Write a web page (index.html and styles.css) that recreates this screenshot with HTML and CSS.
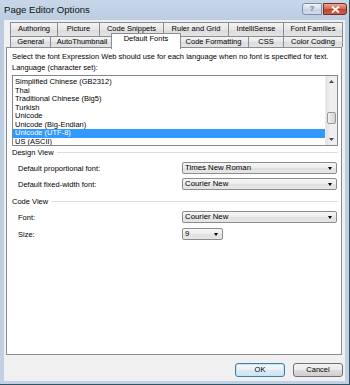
FILE: index.html
```
<!DOCTYPE html>
<html>
<head>
<meta charset="utf-8">
<link rel="stylesheet" href="styles.css">
</head>
<body>
<div class="window">
  <div class="titlebar">
    <span class="title">Page Editor Options</span>
    <div class="caption">
      <span class="cap-help">?</span>
      <span class="cap-close"><svg width="9" height="7" viewBox="0 0 9 7"><path d="M1 0.5 L8 6.5 M8 0.5 L1 6.5" stroke="#fff" stroke-width="1.8"/></svg></span>
    </div>
  </div>
  <div class="client">
    <div class="tabs">
      <div class="tabrow back">
        <div class="tab t-authoring">Authoring</div>
        <div class="tab t-picture">Picture</div>
        <div class="tab t-snippets">Code Snippets</div>
        <div class="tab t-ruler">Ruler and Grid</div>
        <div class="tab t-intelli">IntelliSense</div>
        <div class="tab t-families">Font Families</div>
      </div>
      <div class="tabrow front">
        <div class="tab t-general">General</div>
        <div class="tab t-thumb">AutoThumbnail</div>
        <div class="tab t-fonts selected">Default Fonts</div>
        <div class="tab t-format">Code Formatting</div>
        <div class="tab t-css">CSS</div>
        <div class="tab t-color">Color Coding</div>
      </div>
    </div>
    <div class="panel">
      <div class="intro">Select the font Expression Web should use for each language when no font is specified for text.</div>
      <div class="lang-label">Language (character set):</div>
      <div class="listbox">
        <div class="items">
          <div class="item">Simplified Chinese (GB2312)</div>
          <div class="item">Thai</div>
          <div class="item">Traditional Chinese (Big5)</div>
          <div class="item">Turkish</div>
          <div class="item">Unicode</div>
          <div class="item">Unicode (Big-Endian)</div>
          <div class="item sel">Unicode (UTF-8)</div>
          <div class="item">US (ASCII)</div>
        </div>
        <div class="scrollbar">
          <div class="sb-btn"><svg width="5" height="3" viewBox="0 0 5 3"><path d="M0 3 L2.5 0 L5 3Z" fill="#4d4d4d"/></svg></div>
          <div class="sb-track"><div class="sb-thumb"></div></div>
          <div class="sb-btn"><svg width="5" height="3" viewBox="0 0 5 3"><path d="M0 0 L5 0 L2.5 3Z" fill="#4d4d4d"/></svg></div>
        </div>
      </div>

      <div class="group-head"><span>Design View</span><i class="rule"></i></div>
      <div class="row first">
        <span class="label">Default proportional font:</span>
        <div class="select wide"><span>Times New Roman</span><i class="arrow"></i></div>
      </div>
      <div class="row">
        <span class="label">Default fixed-width font:</span>
        <div class="select wide"><span>Courier New</span><i class="arrow"></i></div>
      </div>

      <div class="group-head code"><span>Code View</span><i class="rule"></i></div>
      <div class="row first">
        <span class="label">Font:</span>
        <div class="select wide"><span>Courier New</span><i class="arrow"></i></div>
      </div>
      <div class="row first">
        <span class="label">Size:</span>
        <div class="select small"><span>9</span><i class="arrow"></i></div>
      </div>
    </div>
    <div class="buttons">
      <div class="btn default">OK</div>
      <div class="btn">Cancel</div>
    </div>
  </div>
</div>
</body>
</html>
```
FILE: styles.css
```
* { box-sizing: border-box; }

html, body {
  margin: 0;
  padding: 0;
}

body {
  width: 350px;
  height: 385px;
  overflow: hidden;
  font-family: "Liberation Sans", Arial, sans-serif;
  font-size: 7.5px;
  color: #000;
}

.window {
  width: 350px;
  height: 385px;
  display: flex;
  flex-direction: column;
  padding: 0 4px 3px 4px;
  background: linear-gradient(#c8d7e8, #bccde1 20px, #c1d1e3);
  border-right: 1px solid #2b5668;
  border-bottom: 1px solid #2b5668;
}

.titlebar {
  height: 20px;
  flex: 0 0 20px;
  display: flex;
  justify-content: space-between;
  align-items: flex-start;
  margin-right: -2px;
}

.title {
  font-size: 9.6px;
  line-height: 10px;
  margin-top: 5px;
  margin-left: 0;
  color: #111;
}

.caption {
  display: flex;
  gap: 1px;
  margin-top: 3px;
  height: 12px;
}

.cap-help {
  width: 20px;
  height: 12px;
  border: 1px solid #7a8ea6;
  border-radius: 3px 0 0 3px;
  background: linear-gradient(#edf2f8, #d3deeb 50%, #c5d3e4 51%, #d2dded);
  color: #667a93;
  font-size: 8px;
  line-height: 10px;
  text-align: center;
  font-weight: bold;
}

.cap-close {
  width: 24px;
  height: 12px;
  border: 1px solid #7a2c20;
  border-radius: 0 3px 3px 0;
  background: linear-gradient(#e9a896, #d2654d 50%, #c2442b 51%, #cc6048);
  display: flex;
  align-items: center;
  justify-content: center;
}

.client {
  flex: 1;
  background: #f0f0f0;
  display: flex;
  flex-direction: column;
  padding: 2px 3px 0 2px;
}

.tabs {
  padding: 0 0 0 4px;
}

.tabrow {
  display: flex;
  height: 14px;
  padding-left: 1px;
}

.tabrow.front {
  height: 11px;
  position: relative;
  z-index: 2;
}

.tab {
  flex: 0 0 auto;
  border: 1px solid #898c95;
  border-bottom: none;
  margin-left: -1px;
  background: linear-gradient(#f4f4f4, #e6e6e6 50%, #dcdcdc 51%, #e4e4e4);
  text-align: center;
  line-height: 12px;
  white-space: nowrap;
  height: 100%;
}

.t-authoring { width: 48px; }
.t-picture { width: 43px; }
.t-snippets { width: 65px; }
.t-ruler { width: 66px; }
.t-intelli { width: 56px; }
.t-families { width: 60px; }

.t-general { width: 41px; }
.t-thumb { width: 64px; }
.t-fonts { width: 70px; }
.t-format { width: 71px; }
.t-css { width: 36px; }
.t-color { width: 60px; }

.tabrow.front .tab {
  line-height: 10px;
}

.tab.selected {
  position: relative;
  z-index: 3;
  background: #fff;
  height: 16px;
  margin-top: -3px;
  margin-left: -3px;
  margin-right: -2px;
  line-height: 13px;
}

.panel {
  flex: 0 0 308px;
  background: #fff;
  border: 1px solid #898c95;
  padding: 4px 3px 0 5px;
  position: relative;
  z-index: 1;
}

.intro {
  line-height: 9px;
  white-space: nowrap;
}

.lang-label {
  line-height: 9px;
  margin-top: 2px;
}

.listbox {
  margin-top: 3px;
  height: 71px;
  border: 1px solid #828790;
  display: flex;
}

.items {
  flex: 1;
  padding-top: 2px;
  overflow: hidden;
}

.item {
  line-height: 8.5px;
  height: 8.5px;
  padding-left: 2px;
  white-space: nowrap;
}

.item.sel {
  background: #3399ff;
  color: #fff;
}

.scrollbar {
  width: 12px;
  display: flex;
  flex-direction: column;
  background: linear-gradient(90deg, #e2e2e2, #f0f0f0 40%, #eeeeee);
  border-left: 1px solid #ececec;
}

.sb-btn {
  height: 11px;
  display: flex;
  align-items: center;
  justify-content: center;
}

.sb-track {
  flex: 1;
  display: flex;
  flex-direction: column;
  justify-content: flex-end;
  padding: 0 0 10px 0;
}

.sb-thumb {
  height: 12px;
  margin: 0 1px;
  border: 1px solid #989898;
  border-radius: 2px;
  background: linear-gradient(90deg, #f2f2f2, #e2e2e2 50%, #d4d4d4);
}

.group-head {
  display: flex;
  align-items: center;
  line-height: 9px;
  margin-top: 2px;
}

.group-head.code {
  margin-top: 7px;
}

.group-head .rule {
  flex: 1;
  margin-left: 3px;
  border-top: 1px solid #d5dfe5;
  height: 0;
}

.row {
  display: flex;
  align-items: center;
  height: 12px;
  margin-top: 4px;
}

.row.first {
  margin-top: 5px;
}

.label {
  width: 170px;
  padding-left: 6px;
  flex: 0 0 170px;
}

.select {
  height: 12px;
  border: 1px solid #8c8c8c;
  border-radius: 2px;
  background: linear-gradient(#f6f6f6, #ececec 50%, #e1e1e1 51%, #e6e6e6);
  display: flex;
  align-items: center;
  justify-content: space-between;
  padding: 0 4px 0 2px;
  line-height: 10px;
  font-size: 7.8px;
}

.select.wide {
  width: 155px;
}

.select.small {
  width: 41px;
}

.arrow {
  width: 0;
  height: 0;
  border-left: 2.5px solid transparent;
  border-right: 2.5px solid transparent;
  border-top: 3px solid #000;
}

.buttons {
  display: flex;
  justify-content: flex-end;
  gap: 8px;
  margin-top: 8px;
  margin-right: -1px;
}

.btn {
  width: 50px;
  height: 14px;
  border: 1px solid #707070;
  border-radius: 3px;
  background: linear-gradient(#f2f2f2, #ebebeb 50%, #dddddd 51%, #cfcfcf);
  text-align: center;
  line-height: 12px;
}

.btn.default {
  border-color: #3c7fb1;
  box-shadow: inset 0 0 0 1px #c4e5f6;
  background: linear-gradient(#f3f8fb, #e9f2f8 50%, #dce9f2 51%, #d3e4ef);
}
```
